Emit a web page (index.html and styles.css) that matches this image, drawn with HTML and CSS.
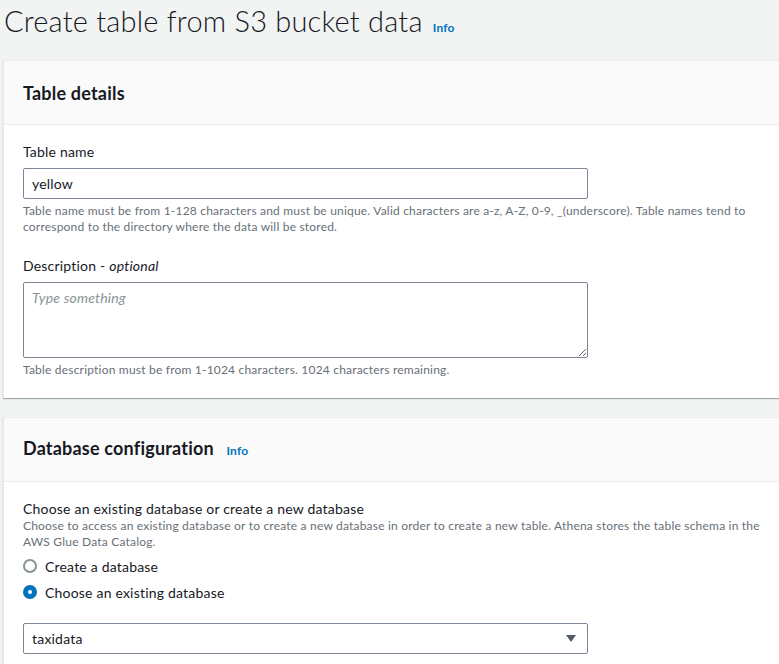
FILE: index.html
```html
<!DOCTYPE html>
<html lang="en">
<head>
<meta charset="utf-8">
<title>Create table from S3 bucket data</title>
<link rel="stylesheet" href="styles.css">
</head>
<body>
<div class="page">
  <h1 class="page-title">Create table from S3 bucket data <a class="info" href="#">Info</a></h1>

  <section class="card">
    <header class="card-header">
      <h2 class="card-title">Table details</h2>
    </header>
    <div class="card-body">
      <div class="field">
        <label class="label" for="tname">Table name</label>
        <input class="input" id="tname" type="text" value="yellow">
        <p class="hint">Table name must be from 1-128 characters and must be unique. Valid characters are a-z, A-Z, 0-9, _(underscore). Table names tend to correspond to the directory where the data will be stored.</p>
      </div>
      <div class="field field-spaced">
        <label class="label" for="tdesc">Description - <i>optional</i></label>
        <textarea class="textarea" id="tdesc" placeholder="Type something"></textarea>
        <p class="hint">Table description must be from 1-1024 characters. 1024 characters remaining.</p>
      </div>
    </div>
  </section>

  <section class="card">
    <header class="card-header">
      <h2 class="card-title">Database configuration <a class="info" href="#">Info</a></h2>
    </header>
    <div class="card-body">
      <div class="field">
        <div class="label">Choose an existing database or create a new database</div>
        <p class="hint hint-top">Choose to access an existing database or to create a new database in order to create a new table. Athena stores the table schema in the AWS Glue Data Catalog.</p>
        <div class="radios">
          <label class="radio"><span class="dot"></span>Create a database</label>
          <label class="radio"><span class="dot dot-on"></span>Choose an existing database</label>
        </div>
      </div>
      <div class="select">
        <span>taxidata</span>
        <svg class="caret" width="10" height="7" viewBox="0 0 10 7"><path d="M0 0H10L5 7Z" fill="#545b64"/></svg>
      </div>
    </div>
  </section>
</div>
</body>
</html>
```

FILE: styles.css
```css
html, body {
  margin: 0;
  padding: 0;
  overflow: hidden;
}
body {
  background: #f2f3f3;
  color: #16191f;
  font-family: Lato, "Liberation Sans", sans-serif;
  font-size: 14px;
  letter-spacing: 0.2px;
}
.page {
  width: 830px;
  padding-left: 3px;
}
.page-title {
  margin: 0 0 0 1px;
  padding-top: 3px;
  height: 60px;
  box-sizing: border-box;
  font-size: 29px;
  font-weight: 300;
  line-height: 36px;
  color: #16191f;
  letter-spacing: 0.2px;
}
.info {
  font-size: 12px;
  font-weight: 700;
  color: #0073bb;
  text-decoration: none;
  margin-left: 2px;
  letter-spacing: 0.2px;
}
.card {
  background: #fff;
  border-top: 1px solid #eaeded;
  border-left: 1px solid #eaeded;
  box-shadow: 0 1px 1px 0 rgba(0, 28, 36, 0.35);
  margin-bottom: 19px;
}
.card-header {
  background: #fafafa;
  height: 63px;
  border-bottom: 1px solid #eaeded;
  display: flex;
  align-items: center;
  padding: 0 19px;
}
.card-title {
  margin: 0;
  font-size: 18px;
  font-weight: 700;
  line-height: 22px;
}
.card-title .info {
  margin-left: 8px;
}
.card-body {
  padding: 17px 19px 20px;
}
.field-spaced {
  margin-top: 21px;
}
.label {
  display: block;
  line-height: 20px;
  margin-bottom: 6px;
}
.label i {
  font-style: italic;
}
.input, .textarea, .select {
  box-sizing: border-box;
  width: 565px;
  border: 1px solid #7b8794;
  border-radius: 2px;
  font-family: inherit;
  font-size: 14px;
  letter-spacing: 0.2px;
  color: #16191f;
  padding: 0 8px;
  background: #fff;
  display: block;
  margin: 0;
}
.input {
  height: 31px;
}
.textarea {
  height: 76px;
  padding-top: 5px;
  resize: vertical;
  line-height: 20px;
}
.textarea::placeholder {
  color: #879596;
  font-style: italic;
}
.hint {
  margin: 4px 0 0;
  max-width: 740px;
  font-size: 12px;
  line-height: 16px;
  letter-spacing: 0.2px;
  color: #687078;
}
.hint-top {
  margin-top: -7px;
}
.radios {
  display: flex;
  flex-direction: column;
  gap: 4px;
  margin-top: 5px;
}
.radio {
  display: flex;
  align-items: center;
  gap: 8px;
  height: 22px;
}
.dot {
  box-sizing: border-box;
  width: 14px;
  height: 14px;
  border-radius: 50%;
  border: 2px solid #879596;
  background: #fff;
}
.dot-on {
  border: 5px solid #0073bb;
}
.select {
  margin-top: 20px;
  height: 31px;
  display: flex;
  align-items: center;
  justify-content: space-between;
  padding-right: 11px;
}
.caret {
  display: block;
}
```
